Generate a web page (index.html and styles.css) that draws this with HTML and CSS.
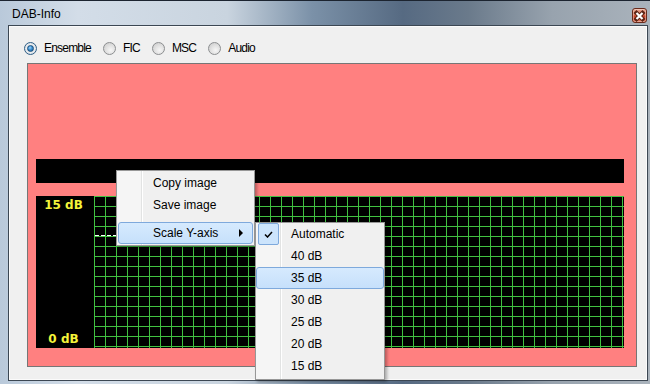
FILE: index.html
```html
<!DOCTYPE html>
<html lang="en">
<head>
    <meta charset="UTF-8">
    <title>DAB-Info</title>
    <link rel="stylesheet" href="styles.css">
</head>
<body>
    <div class="window">
        <div class="titlebar">
            <span class="title">DAB-Info</span>
            <span class="close">
                <svg width="13" height="12" viewBox="0 0 13 12">
                    <path d="M3.5 3 L9.5 9 M9.5 3 L3.5 9" stroke="#5a2214" stroke-width="4.2" stroke-linecap="square"/>
                    <path d="M3.5 3 L9.5 9 M9.5 3 L3.5 9" stroke="#fff" stroke-width="2.2"/>
                </svg>
            </span>
        </div>
        <div class="client">
            <div class="modes">
                <label class="mode"><span class="radio checked"></span>Ensemble</label>
                <label class="mode"><span class="radio"></span>FIC</label>
                <label class="mode"><span class="radio"></span>MSC</label>
                <label class="mode"><span class="radio"></span>Audio</label>
            </div>
            <div class="scope">
                <div class="bar"></div>
                <div class="plot">
                    <div class="axis">
                        <span>15 dB</span>
                        <span>0 dB</span>
                    </div>
                    <div class="grid">
                        <div class="trace" style="top: 39px; width: 30px;"></div>
                    </div>
                </div>
            </div>
        </div>

        <!-- context menu -->
        <div class="menu ctx">
            <div class="item">Copy image</div>
            <div class="item">Save image</div>
            <div class="sep"></div>
            <div class="item active">Scale Y-axis<span class="arrow"></span></div>
        </div>
        <div class="menu sub">
            <div class="item checked">
                <span class="check">
                    <svg width="9" height="7" viewBox="0 0 9 7"><path d="M1 3.5 L3.5 6 L8 1" fill="none" stroke="#000" stroke-width="1.5"/></svg>
                </span>Automatic
            </div>
            <div class="item">40 dB</div>
            <div class="item active">35 dB</div>
            <div class="item">30 dB</div>
            <div class="item">25 dB</div>
            <div class="item">20 dB</div>
            <div class="item">15 dB</div>
        </div>
    </div>
</body>
</html>
```

FILE: styles.css
```css
body {
    margin: 0;
    font-family: "Liberation Sans", Arial, sans-serif;
    font-size: 12px;
    color: #000;
}
.window {
    position: relative;
    width: 650px;
    height: 384px;
    box-sizing: border-box;
    padding: 0 2px 3px 8px;
    display: flex;
    flex-direction: column;
    background: linear-gradient(90deg, #b9c9da 0%, #d3dde8 12%, #c9d4df 35%, #7b91a8 48%, #566a82 62%, #6a7a8b 72%, #98a3ae 85%, #aab3bc 100%);
    box-shadow: inset 0 1px 0 #1c2430;
    overflow: hidden;
}
.titlebar {
    height: 25px;
    display: flex;
    align-items: flex-start;
    margin-left: -8px;
    margin-right: -2px;
}
.title {
    margin: 7px 0 0 12px;
    line-height: 14px;
    color: #000;
}
.close {
    margin: 8px 3px 0 auto;
    width: 13px;
    height: 13px;
    border: 1px solid #6a2a1b;
    border-radius: 3px;
    display: flex;
    align-items: center;
    justify-content: center;
    background: linear-gradient(#eaa893, #d66e52 45%, #c53f24 55%, #dc7a5e);
    box-shadow: inset 0 0 0 1px rgba(255,255,255,0.35);
}
.client {
    height: 356px;
    box-sizing: border-box;
    border: 1px solid #3c4753;
    background: #f0f0f0;
    box-shadow: inset 0 0 0 1px #fbfbfb;
}

/* radio row */
.modes {
    height: 37px;
    box-sizing: border-box;
    padding: 7px 0 0 15px;
    display: flex;
    align-items: center;
    gap: 12px;
}
.mode {
    display: flex;
    align-items: center;
    gap: 7px;
    letter-spacing: -0.8px;
}
.radio {
    position: relative;
    width: 11px;
    height: 11px;
    border: 1px solid #8c8e90;
    border-radius: 50%;
    background: radial-gradient(circle at 60% 65%, #f6f6f6 0, #e2e2e2 45%, #c8c8c8 100%);
}
.radio.checked {
    border-color: #2e5e86;
    background: radial-gradient(circle, #f4f4f4 40%, #c4d0dc 100%);
}
.radio.checked::after {
    content: "";
    position: absolute;
    left: 2px;
    top: 2px;
    width: 5px;
    height: 5px;
    border: 1px solid #1b4f7c;
    border-radius: 50%;
    background: radial-gradient(circle at 40% 35%, #9fd6ff 0, #3b8ed0 45%, #12558f 100%);
}

/* pink scope panel */
.scope {
    margin-left: 18px;
    width: 610px;
    height: 304px;
    box-sizing: border-box;
    border: 1px solid #767676;
    background: #ff8080;
    padding: 95px 12px 18px 8px;
    display: flex;
    flex-direction: column;
    gap: 13px;
}
.bar {
    height: 24px;
    background: #000;
}
.plot {
    height: 152px;
    display: flex;
    background: #000;
}
.axis {
    width: 58px;
    box-sizing: border-box;
    padding: 2px 3px 2px 0;
    display: flex;
    flex-direction: column;
    justify-content: space-between;
    align-items: center;
    font-family: "DejaVu Sans", sans-serif;
    font-weight: bold;
    font-size: 12px;
    line-height: 14px;
    color: #f4f43a;
}
.grid {
    flex: 1;
    position: relative;
    background-color: #000;
    background-image:
        linear-gradient(90deg, #41c141 1px, transparent 1px),
        linear-gradient(#41c141 1px, transparent 1px);
    background-size: 11px 100%, 100% 10px;
}
.trace {
    position: absolute;
    left: 1px;
    height: 1px;
    background: repeating-linear-gradient(90deg, #fff 0 4px, transparent 4px 6px);
}

/* popup menus */
.menu {
    position: absolute;
    box-sizing: border-box;
    border: 1px solid #979797;
    background: linear-gradient(90deg, #f5f5f5 24px, #e2e3e3 24px 25px, #fff 25px 26px, #f0f0f0 26px);
    box-shadow: 2px 2px 3px rgba(0,0,0,0.3);
}
.ctx {
    left: 116px;
    top: 170px;
    width: 139px;
    height: 76px;
    padding: 1px;
}
.sub {
    left: 255px;
    top: 222px;
    width: 130px;
    height: 158px;
    padding: 0;
}
.item {
    height: 22px;
    box-sizing: border-box;
    padding-left: 34px;
    display: flex;
    align-items: center;
    border: 1px solid transparent;
    border-radius: 3px;
}
.item.active {
    border-color: #7ea9dc;
    background: linear-gradient(#d6eafe, #c6e0fb);
}
.sep {
    height: 6px;
    margin-left: 30px;
    box-sizing: border-box;
    padding-top: 3px;
    background: linear-gradient(#e0e0e0 1px, #fff 1px 2px, transparent 2px);
    background-clip: content-box;
}
.arrow {
    margin: 0 9px 0 auto;
    width: 0;
    height: 0;
    border-top: 4px solid transparent;
    border-bottom: 4px solid transparent;
    border-left: 4px solid #000;
}
.sub .item.checked {
    padding-left: 0;
}
.check {
    width: 19px;
    height: 20px;
    margin: 0 12px 0 1px;
    border: 1px solid #7ea9dc;
    border-radius: 2px;
    background: #cce4fc;
    display: flex;
    align-items: center;
    justify-content: center;
}
```
